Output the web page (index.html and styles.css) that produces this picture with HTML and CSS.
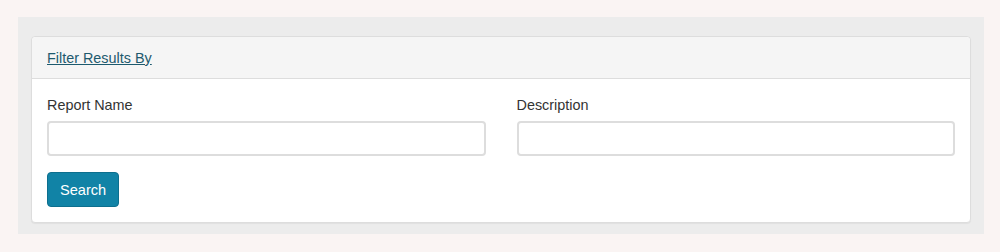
FILE: index.html
```html
<!DOCTYPE html>
<html lang="en">
<head>
    <meta charset="UTF-8">
    <title>Reports</title>
    <link rel="stylesheet" href="styles.css">
</head>
<body>
    <div class="wrapper">
        <div class="panel">
            <div class="panel-heading">
                <a href="#" class="panel-title">Filter Results By</a>
            </div>
            <div class="panel-body">
                <div class="row">
                    <div class="field">
                        <label for="reportName">Report Name</label>
                        <input type="text" id="reportName">
                    </div>
                    <div class="field">
                        <label for="description">Description</label>
                        <input type="text" id="description">
                    </div>
                </div>
                <button class="search-btn">Search</button>
            </div>
        </div>
    </div>
</body>
</html>
```

FILE: styles.css
```css
body {
    font-family: 'Liberation Sans', Arial, sans-serif;
    font-size: 14px;
    color: #333;
    background-color: #faf4f3;
    margin: 0;
    padding: 17px 16px 0 18px;
}
.wrapper {
    background-color: #ececec;
    padding: 19px 13px 11px 13px;
}
.panel {
    background: #fff;
    border: 1px solid #ddd;
    border-radius: 4px;
    box-shadow: 0 1px 1px rgba(0, 0, 0, 0.05);
}
.panel-heading {
    background-color: #f5f5f5;
    border-bottom: 1px solid #ddd;
    border-radius: 4px 4px 0 0;
    padding: 12px 15px 11px;
    height: 18px;
    line-height: 18px;
}
.panel-title {
    color: #1d5a6e;
    text-decoration: underline;
    font-size: 14.4px;
}
.panel-body {
    padding: 16px 15px 15px;
}
.row {
    display: flex;
    gap: 31px;
}
.field {
    flex: 1;
}
.field label {
    display: block;
    font-size: 14.4px;
    line-height: 20px;
    margin-bottom: 6px;
    color: #333;
}
.field input {
    display: block;
    width: 100%;
    box-sizing: border-box;
    height: 35px;
    border: 2px solid #ddd;
    border-radius: 4px;
    padding: 6px 10px;
    font-family: inherit;
    font-size: 14px;
}
.search-btn {
    margin-top: 16px;
    height: 35px;
    padding: 0 12px;
    background-color: #1183a6;
    color: white;
    border: 1px solid #0d6f8e;
    border-radius: 4px;
    font-family: inherit;
    font-size: 14.6px;
    cursor: pointer;
}
```
